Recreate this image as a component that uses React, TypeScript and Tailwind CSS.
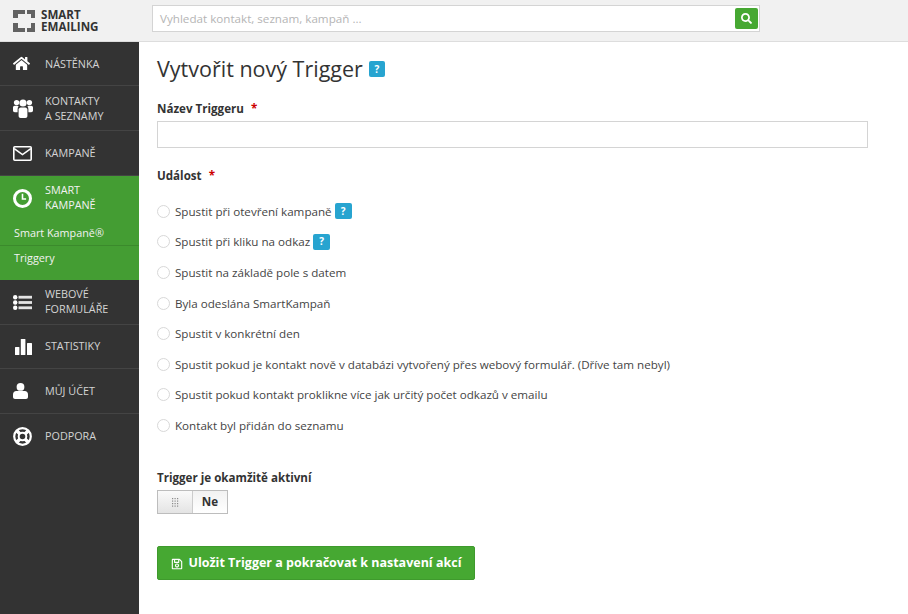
import type { ReactNode } from 'react';
import { FaHome, FaRegSave, FaSearch } from 'react-icons/fa';

function UsersIcon() {
  return (
    <svg width="20" height="19" viewBox="0 0 20 19" fill="currentColor">
      <circle cx="3.6" cy="3.6" r="2.7" />
      <circle cx="16.4" cy="3.6" r="2.7" />
      <path d="M0 8.5c0-1 .8-1.7 1.8-1.7h2.6c.5 0 .9.2 1.2.5-.6.7-1 1.7-1 2.9v3H1.8C.8 13.2 0 12.5 0 11.5zM20 8.5c0-1-.8-1.7-1.8-1.7h-2.6c-.5 0-.9.2-1.2.5.6.7 1 1.7 1 2.9v3h2.8c1 0 1.8-.7 1.8-1.7z" />
      <circle cx="10" cy="4" r="3.6" />
      <path d="M5.6 10.6c0-1.2 1-2.2 2.2-2.2h4.4c1.2 0 2.2 1 2.2 2.2V17c0 1.1-.9 2-2 2H7.6c-1.1 0-2-.9-2-2z" />
    </svg>
  );
}

function EnvelopeIcon() {
  return (
    <svg width="19" height="15" viewBox="0 0 19 15" fill="none" stroke="currentColor" strokeWidth="1.6">
      <rect x="0.8" y="0.8" width="17.4" height="13.4" rx="1" />
      <path d="M1.2 2.6l8.3 6 8.3-6" />
    </svg>
  );
}

function ClockIcon() {
  return (
    <svg width="19" height="19" viewBox="0 0 19 19" fill="none" stroke="currentColor">
      <circle cx="9.5" cy="9.5" r="8" strokeWidth="3" />
      <path d="M9.5 4.8v5.2h3.6" strokeWidth="1.6" />
    </svg>
  );
}

function ListIcon() {
  return (
    <svg width="19" height="15" viewBox="0 0 19 15" fill="currentColor">
      <circle cx="2.2" cy="2.2" r="2.2" />
      <circle cx="2.2" cy="7.5" r="2.2" />
      <circle cx="2.2" cy="12.8" r="2.2" />
      <rect x="5.5" y="0.8" width="13.5" height="2.8" fill="#e4e4e4" />
      <rect x="5.5" y="6.1" width="13.5" height="2.8" fill="#e4e4e4" />
      <rect x="5.5" y="11.4" width="13.5" height="2.8" fill="#e4e4e4" />
    </svg>
  );
}

function BarsIcon() {
  return (
    <svg width="19" height="17" viewBox="0 0 19 17" fill="currentColor">
      <rect x="2" y="9" width="4.4" height="8" rx="0.5" />
      <rect x="7.8" y="1" width="4.6" height="16" rx="0.5" />
      <rect x="14" y="5" width="5" height="12" rx="0.5" />
    </svg>
  );
}

function UserIcon() {
  return (
    <svg width="15" height="16" viewBox="0 0 15 16" fill="currentColor">
      <circle cx="7.5" cy="3.9" r="3.9" />
      <path d="M0 11.2c0-1.8 1.4-3.2 3.2-3.2h8.6c1.8 0 3.2 1.4 3.2 3.2V14c0 1.1-.9 2-2 2H2c-1.1 0-2-.9-2-2z" />
    </svg>
  );
}

function RingIcon() {
  return (
    <svg width="19" height="19" viewBox="0 0 19 19" fill="none" stroke="currentColor">
      <circle cx="9.5" cy="9.5" r="8.3" strokeWidth="2.2" />
      <circle cx="9.5" cy="9.5" r="3.8" strokeWidth="2" />
      <path d="M4 4l3 3M15 4l-3 3M4 15l3-3M15 15l-3-3" strokeWidth="3.4" />
    </svg>
  );
}

function LogoMark() {
  return (
    <svg width="22" height="22" viewBox="0 0 22 22" fill="#626262">
      <path d="M0 0h12v4H5v4H0zM14 0h8v8h-4V4h-4zM0 13h5v5h7v4H0zM18 13h4v9h-8v-4h4z" />
    </svg>
  );
}

function GripIcon() {
  return (
    <svg width="7" height="9" viewBox="0 0 7 9" fill="#8a8a8a">
      {[0, 2.5, 5].map((x) =>
        [0, 2.5, 5, 7.5].map((y) => <rect key={`${x}-${y}`} x={x} y={y} width="1.2" height="1.2" />)
      )}
    </svg>
  );
}

function HelpBadge({ wide }: { wide?: boolean }) {
  return (
    <span
      className={
        'inline-flex items-center justify-center rounded-[2px] bg-[#27a4d0] font-bold text-white text-[10px] h-4 ' +
        (wide ? 'w-[17px]' : 'w-4')
      }
    >
      ?
    </span>
  );
}

interface NavItemProps {
  icon: ReactNode;
  label: ReactNode;
  heightClass: string;
  last?: boolean;
  lift?: boolean;
}

function NavItem({ icon, label, heightClass, last, lift }: NavItemProps) {
  return (
    <a className={'flex items-center pl-[13px] ' + heightClass + (last ? '' : ' border-b border-[#444444]')}>
      <span className="flex w-[32px] shrink-0 text-white">{icon}</span>
      <span className={'text-[10.8px] leading-[15px] text-[#d4d4d4]' + (lift ? ' mb-[2px]' : '')}>{label}</span>
    </a>
  );
}

const events: { label: string; help?: boolean }[] = [
  { label: 'Spustit při otevření kampaně', help: true },
  { label: 'Spustit při kliku na odkaz', help: true },
  { label: 'Spustit na základě pole s datem' },
  { label: 'Byla odeslána SmartKampaň' },
  { label: 'Spustit v konkrétní den' },
  { label: 'Spustit pokud je kontakt nově v databázi vytvořený přes webový formulář. (Dříve tam nebyl)' },
  { label: 'Spustit pokud kontakt proklikne více jak určitý počet odkazů v emailu' },
  { label: 'Kontakt byl přidán do seznamu' },
];

export default function App() {
  return (
    <div className="flex h-[614px] w-[908px] flex-col overflow-hidden bg-white font-['Open_Sans',sans-serif] text-[#333333]">
      <header className="flex h-[42px] shrink-0 items-center border-b border-[#dddddd] bg-[#f1f1f1]">
        <div className="flex w-[152px] shrink-0 items-center gap-[6px] pl-[13px]">
          <LogoMark />
          <div className="text-[11.6px] font-bold leading-[12px] text-[#333333]">
            SMART
            <br />
            EMAILING
          </div>
        </div>
        <div className="mb-[4px] flex h-[27px] w-[608px] items-center justify-between border border-[#d4d4d4] bg-white pl-[7px] pr-[1px]">
          <span className="text-[11.65px] text-[#b5b5b5]">Vyhledat kontakt, seznam, kampaň ...</span>
          <button className="flex h-[21px] w-[23px] items-center justify-center rounded-[2px] bg-[#46a832] text-white">
            <FaSearch size={11} />
          </button>
        </div>
      </header>

      <div className="flex min-h-0 flex-1">
        <aside className="w-[139px] shrink-0 bg-[#333333]">
          <NavItem icon={<FaHome size={17} />} label="NÁSTĚNKA" heightClass="h-[44px]" />
          <NavItem
            icon={<UsersIcon />}
            label={
              <>
                KONTAKTY
                <br />A SEZNAMY
              </>
            }
            heightClass="h-[45px]"
          />
          <NavItem icon={<EnvelopeIcon />} label="KAMPANĚ" heightClass="h-[45px]" lift />
          <div className="h-[104px] bg-[#449d33] text-[#f2f2f2]">
            <div className="flex h-[44px] items-center pl-[13px]">
              <span className="flex w-[32px] shrink-0 text-white">
                <ClockIcon />
              </span>
              <span className="mb-[2px] text-[10.8px] leading-[15px]">
                SMART
                <br />
                KAMPANĚ
              </span>
            </div>
            <div className="flex h-[26px] items-center border-b border-[#3b8a2c] pl-[14px] pt-[2px] text-[10.8px]">
              Smart Kampaně®
            </div>
            <div className="flex h-[25px] items-center pl-[14px] text-[10.8px]">Triggery</div>
          </div>
          <NavItem
            icon={<ListIcon />}
            label={
              <>
                WEBOVÉ
                <br />
                FORMULÁŘE
              </>
            }
            heightClass="h-[45px]"
            lift
          />
          <NavItem icon={<BarsIcon />} label="STATISTIKY" heightClass="h-[44px]" lift />
          <NavItem icon={<UserIcon />} label="MŮJ ÚČET" heightClass="h-[45px]" lift />
          <NavItem icon={<RingIcon />} label="PODPORA" heightClass="h-[45px]" last lift />
        </aside>

        <main className="min-w-0 flex-1 pl-[18px] pr-[40px]">
          <div className="mt-[12px] flex items-center gap-[6px]">
            <h1 className="text-[21.5px] font-normal leading-[30px] text-[#333333]">Vytvořit nový Trigger</h1>
            <HelpBadge />
          </div>

          <label className="mt-[16px] block text-[11.6px] font-bold leading-[17px]">
            Název Triggeru <span className="ml-[4px] text-[#cc0000]">*</span>
          </label>
          <input className="mt-[4px] block h-[27px] w-[711px] border border-[#d4d4d4] bg-white" />

          <div className="mt-[19px] text-[11.6px] font-bold leading-[17px]">
            Událost <span className="ml-[4px] text-[#cc0000]">*</span>
          </div>

          <div className="mt-[18.8px] flex flex-col gap-[13.6px]">
            {events.map((ev) => (
              <div key={ev.label} className="flex h-[17px] items-center">
                <span className="h-[13px] w-[13px] shrink-0 rounded-full border border-[#d8d8d8] bg-white" />
                <span className="ml-[5px] text-[11.64px] leading-[17px] text-[#444444]">{ev.label}</span>
                {ev.help && (
                  <span className="ml-[3px] flex">
                    <HelpBadge wide />
                  </span>
                )}
              </div>
            ))}
          </div>

          <div className="mt-[35.2px] text-[11.6px] font-bold leading-[17px]">Trigger je okamžitě aktivní</div>
          <div className="mt-[4px] flex h-[24px] w-[71px] border border-[#bdbdbd]">
            <div className="flex w-[35px] items-center justify-center border-r border-[#cccccc] bg-gradient-to-b from-[#fafafa] to-[#e4e4e4]">
              <GripIcon />
            </div>
            <div className="flex flex-1 items-center justify-center bg-gradient-to-b from-[#f2f2f2] to-white text-[11.6px] font-bold">
              Ne
            </div>
          </div>

          <button className="mt-[32px] flex h-[34px] w-[318px] items-center justify-center gap-[6px] rounded-[2px] border border-[#3f9a2d] bg-[#46a832] pt-[1px] text-[12.5px] font-bold text-white">
            <FaRegSave size={12} />
            Uložit Trigger a pokračovat k nastavení akcí
          </button>
        </main>
      </div>
    </div>
  );
}
